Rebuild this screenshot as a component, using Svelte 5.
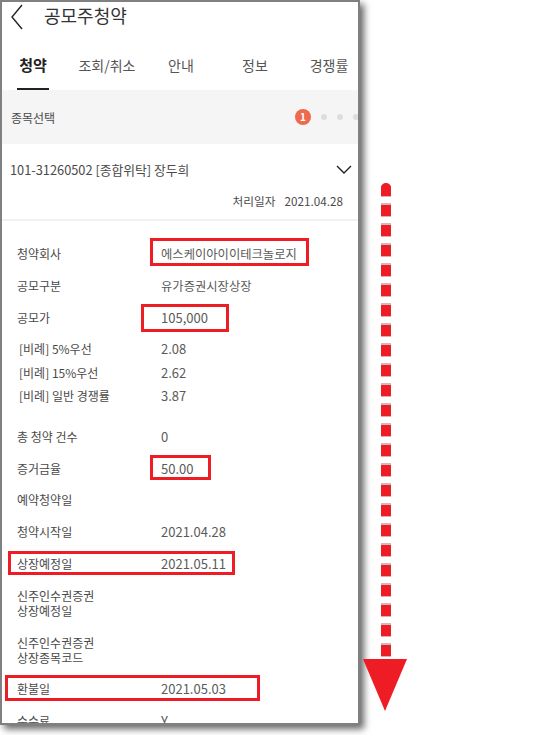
<script>
  const tabs = ['청약', '조회/취소', '안내', '정보', '경쟁률'];

  // box = red annotation drawn over the row
  const rows = [
    { label: '청약회사', value: '에스케이아이이테크놀로지', box: 'box-company', kr: true },
    { label: '공모구분', value: '유가증권시장상장', kr: true },
    { label: '공모가', value: '105,000', box: 'box-price' },
    { label: '[비례] 5%우선', value: '2.08', small: true, first: true },
    { label: '[비례] 15%우선', value: '2.62', small: true },
    { label: '[비례] 일반 경쟁률', value: '3.87', small: true },
    { label: '총 청약 건수', value: '0', gap: true },
    { label: '증거금율', value: '50.00', box: 'box-margin' },
    { label: '예약청약일', value: '' },
    { label: '청약시작일', value: '2021.04.28' },
    { label: '상장예정일', value: '2021.05.11', box: 'box-listing' },
    { label: '신주인수권증권\n상장예정일', value: '', tall: true },
    { label: '신주인수권증권\n상장종목코드', value: '', tall: true },
    { label: '환불일', value: '2021.05.03', box: 'box-refund' },
    { label: '수수료', value: 'Y' }
  ];
</script>

<div class="canvas">
  <div class="phone">
    <header class="title-bar">
      <svg class="back" width="14" height="28" viewBox="0 0 14 28">
        <path d="M12 2 L2 14 L12 26" fill="none" stroke="#222" stroke-width="1.4" />
      </svg>
      <h1>공모주청약</h1>
    </header>

    <nav class="tabs">
      {#each tabs as tab, i}
        <div class="tab" class:active={i === 0}>{tab}</div>
      {/each}
    </nav>

    <div class="select-bar">
      <span>종목선택</span>
      <div class="steps">
        <span class="step-on">1</span>
        <span class="dot"></span>
        <span class="dot"></span>
        <span class="dot"></span>
      </div>
    </div>

    <div class="account">
      <span>101-31260502 [종합위탁] 장두희</span>
      <svg width="16" height="9" viewBox="0 0 16 9">
        <path d="M1 1 L8 8 L15 1" fill="none" stroke="#222" stroke-width="1.4" />
      </svg>
    </div>
    <div class="processed">
      <span>처리일자</span>
      <span class="date">2021.04.28</span>
    </div>

    <div class="rows">
      {#each rows as row}
        <div class="row" class:small={row.small} class:first={row.first} class:gap={row.gap} class:tall={row.tall}>
          <div class="label">{row.label}</div>
          <div class="value" class:kr={row.kr}>{row.value}</div>
          {#if row.box}<div class="box {row.box}"></div>{/if}
        </div>
      {/each}
    </div>
  </div>

  <div class="dashes"></div>
  <svg class="arrow-head" width="44" height="52" viewBox="0 0 44 52">
    <polygon points="0,0 44,0 22,52" fill="#ee1c25" />
  </svg>
</div>

<style>
  :global(body) {
    background: #fff;
  }

  .canvas {
    position: relative;
    width: 553px;
    height: 735px;
    overflow: hidden;
    font-family: "Noto Sans CJK KR", "Noto Sans", sans-serif;
    color: #4a4a4a;
  }

  .phone {
    width: 360px;
    height: 725px;
    box-sizing: border-box;
    border: 2px solid #808080;
    background: #fff;
    overflow: hidden;
    box-shadow: 4px 4px 7px rgba(0, 0, 0, 0.6);
  }

  .title-bar {
    display: flex;
    align-items: center;
    height: 30px;
    padding-left: 8px;
  }

  .back {
    margin-right: 20px;
  }

  h1 {
    margin: -4px 0 0;
    font-size: 18px;
    font-weight: 400;
    color: #333;
  }

  .tabs {
    display: grid;
    grid-template-columns: repeat(5, 74px);
    margin-left: -6px;
    height: 58px;
  }

  .tab {
    position: relative;
    padding-top: 23px;
    text-align: center;
    font-size: 14px;
    line-height: 20px;
    color: #555;
  }

  .tab.active {
    font-size: 15px;
    font-weight: 700;
    color: #222;
  }

  .tab.active::after {
    content: "";
    position: absolute;
    left: 21px;
    bottom: 0;
    width: 32px;
    height: 2px;
    background: #222;
  }

  .select-bar {
    display: flex;
    align-items: center;
    justify-content: space-between;
    height: 54px;
    padding-left: 9px;
    background: #f5f5f5;
    font-size: 12px;
  }

  .steps {
    display: flex;
    align-items: center;
    margin-right: -1px;
  }

  .step-on {
    width: 16px;
    height: 16px;
    margin-right: 10px;
    border-radius: 50%;
    background: #ee6a4c;
    color: #fff;
    font-size: 10px;
    font-weight: 700;
    line-height: 16px;
    text-align: center;
  }

  .dot {
    width: 6px;
    height: 6px;
    margin-right: 10px;
    border-radius: 50%;
    background: #ddd;
  }

  .dot:last-child {
    margin-right: 0;
  }

  .account {
    display: flex;
    align-items: center;
    justify-content: space-between;
    height: 50px;
    padding: 0 6px 0 8px;
    font-size: 12.8px;
  }

  .processed {
    display: flex;
    justify-content: flex-end;
    height: 25px;
    padding: 0 15px 0 0;
    border-bottom: 2px solid #f1f1f1;
    font-size: 11.7px;
    line-height: 14px;
  }

  .date {
    margin-left: 9px;
  }

  .rows {
    padding: 17px 0 0 15px;
  }

  .row {
    position: relative;
    display: grid;
    grid-template-columns: 144px 1fr;
    align-items: center;
    height: 31.7px;
    font-size: 12px;
  }

  .row.small {
    height: 23.5px;
  }

  .row.small .label {
    padding-left: 2px;
  }

  .row.first {
    margin-top: 4px;
  }

  .row.gap {
    margin-top: 13px;
  }

  .row.tall {
    height: 47px;
  }

  .label {
    white-space: pre-line;
    line-height: 15px;
  }

  .value {
    font-size: 13px;
    color: #5a5a5a;
  }

  .value.kr {
    font-size: 12.3px;
  }

  .box {
    position: absolute;
    box-sizing: border-box;
    border: 3px solid #ee1c25;
  }

  .box-company {
    left: 133px;
    top: 0;
    width: 159px;
    height: 28px;
  }

  .box-price {
    left: 124px;
    top: 3px;
    width: 88px;
    height: 28px;
  }

  .box-margin {
    left: 133px;
    top: 3px;
    width: 61px;
    height: 25px;
  }

  .box-listing {
    left: -9px;
    top: 4px;
    width: 227px;
    height: 24px;
  }

  .box-refund {
    left: -12px;
    top: 2px;
    width: 255px;
    height: 26px;
  }

  .dashes {
    position: absolute;
    left: 381px;
    top: 183px;
    width: 10px;
    height: 476px;
    border-radius: 5px 5px 0 0;
    background: repeating-linear-gradient(
      #cdbcbc 0,
      #cdbcbc 2px,
      #ee1c25 2px,
      #ee1c25 13px,
      #d9b0b0 13px,
      #d9b0b0 14px,
      #fff 14px,
      #fff 20px
    );
  }

  .dashes::before {
    content: "";
    display: block;
    height: 5px;
    background: #ee1c25;
    border-radius: 5px 5px 0 0;
  }

  .arrow-head {
    position: absolute;
    left: 363px;
    top: 659px;
  }
</style>
